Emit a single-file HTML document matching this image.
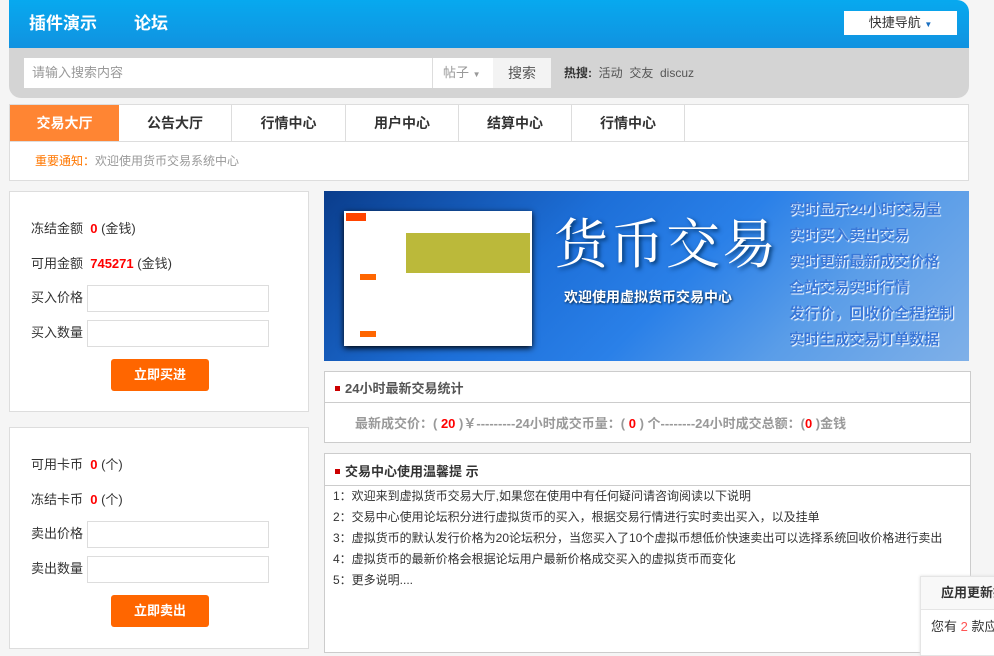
<!DOCTYPE html>
<html><head><meta charset="utf-8"><style>
*{margin:0;padding:0;box-sizing:border-box}
body{width:994px;height:650px;overflow:hidden;background:#f5f5f5;font-family:"Liberation Sans","Noto Sans CJK SC",sans-serif;font-size:13px;color:#333;position:relative}
.a{position:absolute}
.hdr{left:9px;top:0;width:960px;height:48px;background:linear-gradient(#07a9ef,#1192e0);border-radius:0 12px 0 0}
.gray{left:9px;top:48px;width:960px;height:50px;background:#d4d4d4;border-radius:0 0 12px 12px}
.nav{left:9px;top:104px;width:960px;height:77px;background:#fff;border:1px solid #ddd}
.tab{position:absolute;top:0;height:37px;line-height:37px;text-align:center;font-size:14px;font-weight:bold;color:#333;border-right:1px solid #ddd}
.panel{background:#fff;border:1px solid #ddd}
.lbl{position:absolute;left:21px;font-size:13px;color:#333;line-height:16px}
.red{color:#f00;font-weight:bold}
.inp{position:absolute;left:77px;width:182px;height:27px;border:1px solid #ddd;background:#fff}
.btn{position:absolute;left:101px;width:98px;height:32px;background:#ff6600;color:#fff;font-weight:bold;text-align:center;line-height:32px;border-radius:3px;font-size:13px}
.box{background:#fff;border:1px solid #ccc}
</style></head><body>
<div class="a hdr"></div>
<div class="a" style="left:29px;top:13px;color:#fff;font-size:17px;font-weight:bold;line-height:22px">插件演示</div>
<div class="a" style="left:134px;top:13px;color:#fff;font-size:17px;font-weight:bold;line-height:22px">论坛</div>
<div class="a" style="left:844px;top:11px;width:113px;height:24px;background:#fff;text-align:center;line-height:24px;font-size:13px;color:#333">快捷导航 <span style="font-size:8px;color:#1a6fc0">▼</span></div>
<div class="a gray"></div>
<div class="a" style="left:24px;top:58px;width:408px;height:30px;background:#fff;color:#999;line-height:30px;padding-left:8px">请输入搜索内容</div>
<div class="a" style="left:432px;top:58px;width:61px;height:30px;background:#fff;border-left:1px solid #ddd;color:#999;line-height:30px;padding-left:10px">帖子 <span style="font-size:8px">▼</span></div>
<div class="a" style="left:493px;top:58px;width:58px;height:30px;background:#f3f3f3;color:#555;line-height:30px;text-align:center;font-size:14px">搜索</div>
<div class="a" style="left:564px;top:65px;color:#555;font-size:12px;line-height:16px"><b style="color:#333">热搜:</b> &nbsp;活动 &nbsp;交友 &nbsp;discuz</div>
<div class="a nav">
<div class="tab" style="left:0;width:109px;background:#ff8533;color:#fff;border:none">交易大厅</div>
<div class="tab" style="left:109px;width:113px">公告大厅</div>
<div class="tab" style="left:222px;width:114px">行情中心</div>
<div class="tab" style="left:336px;width:113px">用户中心</div>
<div class="tab" style="left:449px;width:113px">结算中心</div>
<div class="tab" style="left:562px;width:113px">行情中心</div>
<div class="a" style="left:0;top:36px;width:958px;border-top:1px solid #ddd"></div>
<div class="a" style="left:25px;top:49px;font-size:12px;color:#999;line-height:14px"><span style="color:#ff7700">重要通知：</span>欢迎使用货币交易系统中心</div>
</div>
<div class="a panel" style="left:9px;top:191px;width:300px;height:221px">
<div class="lbl" style="top:29px">冻结金额 &nbsp;<span class="red">0</span> (金钱)</div>
<div class="lbl" style="top:64px">可用金额 &nbsp;<span class="red">745271</span> (金钱)</div>
<div class="lbl" style="top:98px">买入价格</div><div class="inp" style="top:93px"></div>
<div class="lbl" style="top:133px">买入数量</div><div class="inp" style="top:128px"></div>
<div class="btn" style="top:167px">立即买进</div>
</div>
<div class="a panel" style="left:9px;top:427px;width:300px;height:222px">
<div class="lbl" style="top:29px">可用卡币 &nbsp;<span class="red">0</span> (个)</div>
<div class="lbl" style="top:64px">冻结卡币 &nbsp;<span class="red">0</span> (个)</div>
<div class="lbl" style="top:98px">卖出价格</div><div class="inp" style="top:93px"></div>
<div class="lbl" style="top:133px">卖出数量</div><div class="inp" style="top:128px"></div>
<div class="btn" style="top:167px">立即卖出</div>
</div>
<div class="a" style="left:324px;top:191px;width:645px;height:170px;background:linear-gradient(135deg,#0a3d8c 0%,#1d6fd8 35%,#2a80e8 55%,#5a9de8 75%,#7fb0e8 100%);overflow:hidden">
<div class="a" style="left:20px;top:20px;width:188px;height:135px;background:#fff;box-shadow:0 2px 6px #000">
<div class="a" style="left:2px;top:2px;width:20px;height:8px;background:#f40"></div>
<div class="a" style="left:62px;top:22px;width:124px;height:40px;background:#bbb93a"></div>
<div class="a" style="left:16px;top:63px;width:16px;height:6px;background:#f60"></div>
<div class="a" style="left:16px;top:120px;width:16px;height:6px;background:#f60"></div>
</div>
<div class="a" style="left:230px;top:15px;color:#fff;font-size:54px;line-height:70px;font-family:'Noto Serif CJK SC',serif;text-shadow:2px 2px 4px #036;letter-spacing:2px">货币交易</div>
<div class="a" style="left:240px;top:97px;color:#fff;font-size:14px;font-weight:bold;line-height:18px;text-shadow:1px 1px 2px #024">欢迎使用虚拟货币交易中心</div>
<div class="a" style="left:465px;top:6px;color:#3a78d8;font-size:15px;font-weight:bold;line-height:26px;white-space:nowrap;text-shadow:1px 1px 1px #fff">实时显示24小时交易量<br>实时买入卖出交易<br>实时更新最新成交价格<br>全站交易实时行情<br>发行价，回收价全程控制<br>实时生成交易订单数据</div>
</div>
<div class="a box" style="left:324px;top:371px;width:647px;height:72px">
<div class="a" style="left:0;top:30px;width:645px;border-top:1px solid #ccc"></div>
<div class="a" style="left:10px;top:14px;width:5px;height:5px;background:#c00"></div>
<div class="a" style="left:20px;top:9px;font-weight:bold;color:#555;line-height:16px">24小时最新交易统计</div>
<div class="a" style="left:30px;top:44px;font-weight:bold;color:#999;line-height:16px">最新成交价：( <span style="color:#f00">20</span> )￥---------24小时成交币量：( <span style="color:#f00">0</span> ) 个--------24小时成交总额：(<span style="color:#f00">0</span> )金钱</div>
</div>
<div class="a box" style="left:324px;top:453px;width:647px;height:200px">
<div class="a" style="left:0;top:31px;width:645px;border-top:1px solid #ccc"></div>
<div class="a" style="left:10px;top:15px;width:5px;height:5px;background:#c00"></div>
<div class="a" style="left:20px;top:10px;font-weight:bold;color:#333;line-height:16px">交易中心使用温馨提 示</div>
<div class="a" style="left:8px;top:32px;font-size:12px;line-height:21px;color:#333">1：欢迎来到虚拟货币交易大厅,如果您在使用中有任何疑问请咨询阅读以下说明<br>2：交易中心使用论坛积分进行虚拟货币的买入，根据交易行情进行实时卖出买入，以及挂单<br>3：虚拟货币的默认发行价格为20论坛积分，当您买入了10个虚拟币想低价快速卖出可以选择系统回收价格进行卖出<br>4：虚拟货币的最新价格会根据论坛用户最新价格成交买入的虚拟货币而变化<br>5：更多说明....</div>
</div>
<div class="a" style="left:920px;top:576px;width:80px;height:80px;background:#fff;border:1px solid #e5e5e5;box-shadow:0 0 3px #ddd">
<div style="height:33px;background:#f8f8f8;border-bottom:1px solid #e5e5e5;padding:8px 0 0 20px;font-weight:bold;font-size:13px;white-space:nowrap;line-height:16px">应用更新提</div>
<div style="padding:9px 0 0 10px;font-size:13px;white-space:nowrap;line-height:16px">您有 <span style="color:#f55">2</span> 款应</div>
</div>
</body></html>
